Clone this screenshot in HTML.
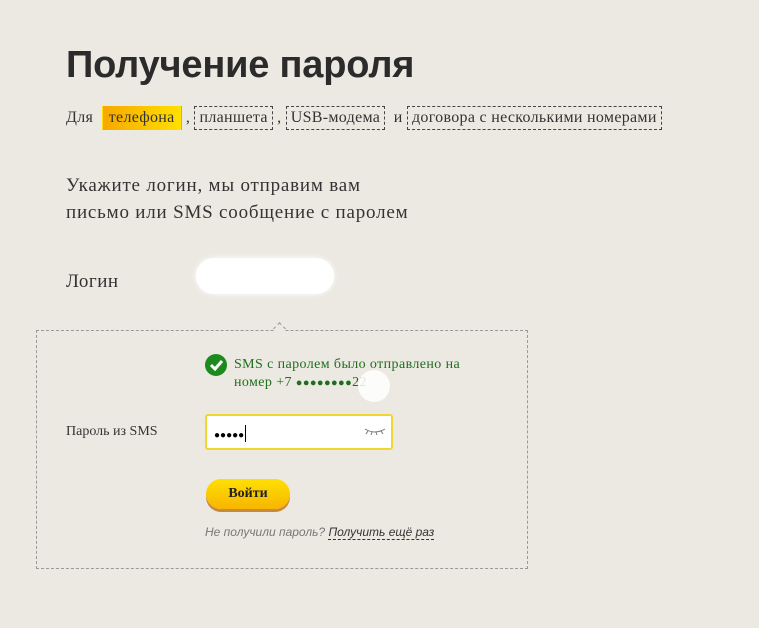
<!DOCTYPE html>
<html><head><meta charset="utf-8"><style>
body{margin:0;background:#ece9e2;width:759px;height:628px;overflow:hidden;position:relative;font-family:"Liberation Serif",serif;color:#333}
.a{position:absolute}
h1{position:absolute;left:66px;top:44px;margin:0;font:bold 38px "Liberation Sans",sans-serif;color:#2b2b2b;letter-spacing:-0.2px}
.tabs{left:66px;top:106px;font-size:16px;letter-spacing:0.3px;color:#333;white-space:nowrap}
.tabs span{display:inline-block;padding:2px 4px;border:1px dashed #444;line-height:18px}
.tabs .on{border:1px solid transparent;background:linear-gradient(90deg,#f6a800,#ffe000);padding:2px 6px}
.box{left:36px;top:330px;width:490px;height:237px;border:1px dashed #999}
</style></head><body>
<h1>Получение пароля</h1>
<div class="a tabs">Для&nbsp; <span class="on">телефона</span> , <span>планшета</span> , <span>USB-модема</span> &nbsp;и <span>договора с несколькими номерами</span></div>
<div class="a" style="left:66px;top:172px;font-size:19px;letter-spacing:0.8px;line-height:27px;color:#333">Укажите логин, мы отправим вам<br>письмо или SMS сообщение с паролем</div>
<div class="a" style="left:66px;top:271px;font-size:19px;letter-spacing:0.5px;color:#333">Логин</div>
<div class="a" style="left:196px;top:258px;width:138px;height:36px;background:#fff;border-radius:18px;box-shadow:0 0 6px #fff"></div>
<div class="a box"></div>
<div class="a" style="left:275px;top:324px;width:8px;height:8px;background:#ece9e2;border-left:1px dashed #999;border-top:1px dashed #999;transform:rotate(45deg)"></div>
<div class="a" style="left:205px;top:354px;width:22px;height:22px;border-radius:50%;background:#1c8a1c"><svg width="22" height="22"><path d="M6 11l4 4 7-8" stroke="#fff" stroke-width="3" fill="none"/></svg></div>
<div class="a" style="left:234px;top:356px;font-size:14px;letter-spacing:0.4px;line-height:18px;color:#1e6e1e">SMS с паролем было отправлено на<br>номер +7 <span style="font-size:11px">●●●●●●●●</span>22</div>
<div class="a" style="left:358px;top:370px;width:32px;height:32px;border-radius:50%;background:#fff;opacity:.85"></div>
<div class="a" style="left:66px;top:424px;font-size:14px;color:#333">Пароль из SMS</div>
<div class="a" style="left:205px;top:414px;width:184px;height:32px;background:#fff;border:2px solid #f2d630;border-radius:3px"></div>
<div class="a" style="left:214px;top:425px;font-size:10px;color:#000">●●●●●<span style="border-left:1px solid #000;margin-left:1px;font-size:16px"></span></div>
<svg class="a" style="left:364px;top:426px" width="22" height="10"><path d="M1 3q10 6 20 0M4 5l-2 3M8 6l-1 3M12 6l1 3M17 5l2 3" stroke="#777" fill="none"/></svg>
<div class="a" style="left:206px;top:479px;width:84px;height:30px;border-radius:15px;background:linear-gradient(#ffe000,#f7b500);box-shadow:0 3px 0 #c88a3a;text-align:center;line-height:30px;font-weight:bold;font-size:14px;color:#222">Войти</div>
<div class="a" style="left:205px;top:525px;font:italic 12px 'Liberation Sans',sans-serif;color:#777">Не получили пароль? <span style="color:#333;border-bottom:1px dashed #333">Получить ещё раз</span></div>
</body></html>
